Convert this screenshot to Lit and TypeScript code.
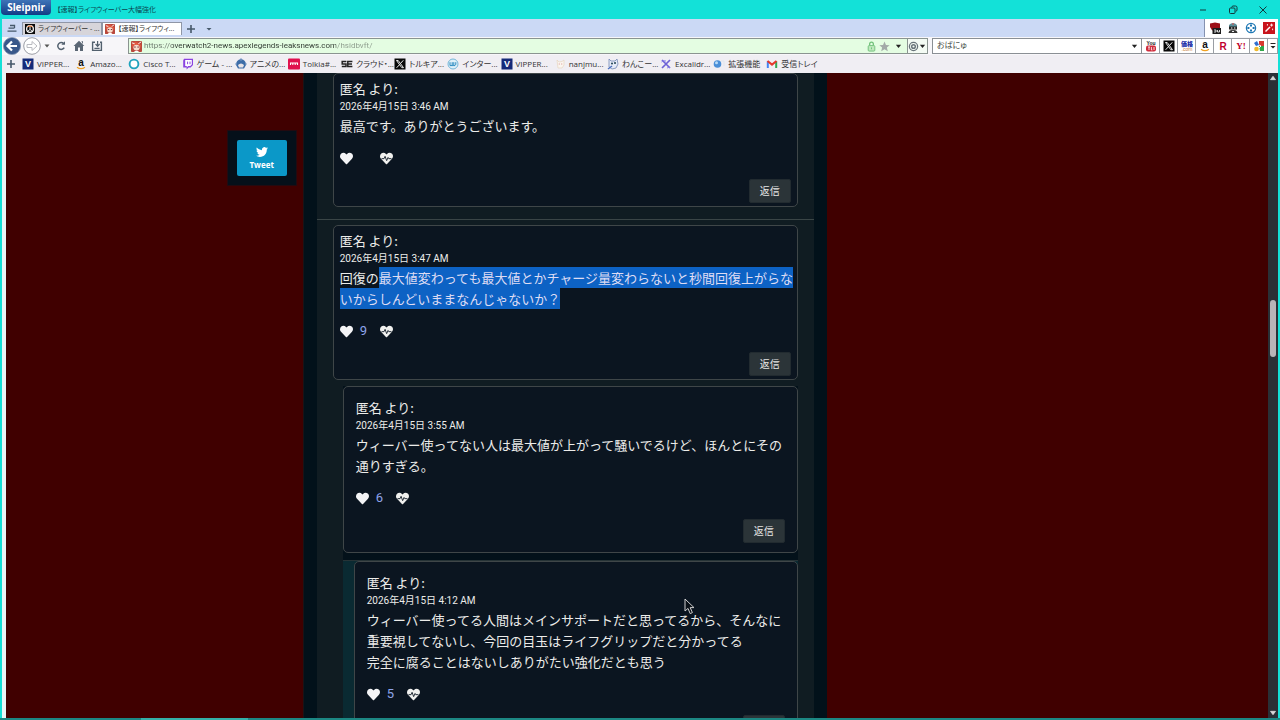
import { LitElement, html, css, svg, nothing, TemplateResult } from "lit";
import { customElement, property } from "lit/decorators.js";

const icon = (body: unknown, size = 12, box = 12) =>
  html`<svg width=${size} height=${size} viewBox="0 0 ${box} ${box}" aria-hidden="true">${body}</svg>`;

const HEART =
  "M462.3 62.6C407.5 15.9 326 24.3 275.7 76.2L256 96.5l-19.7-20.3C186.1 24.3 104.5 15.9 49.7 62.6c-62.8 53.6-66.1 149.8-9.9 207.9l193.5 199.8c12.5 12.9 32.8 12.9 45.3 0l193.5-199.8c56.3-58.1 53-154.3-9.8-207.9z";
const BIRD =
  "M23.953 4.57a10 10 0 01-2.825.775 4.958 4.958 0 002.163-2.723c-.951.555-2.005.959-3.127 1.184a4.92 4.92 0 00-8.384 4.482C7.69 8.095 4.067 6.13 1.64 3.162a4.822 4.822 0 00-.666 2.475c0 1.71.87 3.213 2.188 4.096a4.904 4.904 0 01-2.228-.616v.06a4.923 4.923 0 003.946 4.827 4.996 4.996 0 01-2.212.085 4.936 4.936 0 004.604 3.417 9.867 9.867 0 01-6.102 2.105c-.39 0-.779-.023-1.17-.067a13.995 13.995 0 007.557 2.209c9.053 0 13.998-7.496 13.998-13.985 0-.21 0-.42-.015-.63A9.935 9.935 0 0024 4.59z";

const heart = () => icon(svg`<path fill="#f4f4f6" d=${HEART}/>`, 13, 512);
const heartbeat = () =>
  icon(
    svg`<path fill="#f0f0ee" d=${HEART}/><path d="M60 262H160L200 170L262 340L318 215L345 262H452" fill="none" stroke="#0b1520" stroke-width="34"/>`,
    13,
    512,
  );

const glyph = (letter: string, fill: string, bg: string, size = 9) =>
  svg`<rect x=".5" y=".5" width="11" height="11" fill=${bg}/><text x="6" y="9.3" text-anchor="middle" font-family="Liberation Sans, sans-serif" font-weight="700" font-size=${size} fill=${fill}>${letter}</text>`;
const xMark = svg`<rect x=".5" y=".5" width="11" height="11" fill="#080808"/><path d="M2.5 2.5H4.2L9.5 9.7H7.8Z" fill="none" stroke="#fff" stroke-width=".9"/><path d="M9.3 2.3L6.6 5.4M5.4 6.8L2.6 9.8" stroke="#fff" stroke-width=".9"/>`;
const amazon = svg`<text x="6" y="8" text-anchor="middle" font-family="Liberation Sans, sans-serif" font-weight="700" font-size="10" fill="#111">a</text><path d="M2 9.2Q6 12 10 9.2" fill="none" stroke="#f0a020" stroke-width="1.2"/>`;
const anime = svg`<rect width="12" height="12" rx="1" fill="#b9483c"/><path d="M1 5Q2 0 6 1T11 5L10 8Q9 4 6 4T2 8Z" fill="#e0573f"/><ellipse cx="6" cy="7.2" rx="3.4" ry="3.2" fill="#f7dccb"/><path d="M3.5 6.6h1.6M7 6.6h1.6" stroke="#612" stroke-width="1"/><path d="M1 2l3 1M11 1L8 3" stroke="#fff" stroke-width="1"/><path d="M3 12Q6 9 9 12Z" fill="#fff"/>`;
const overwatch = svg`<rect width="12" height="12" fill="#0a0a0a"/><circle cx="6" cy="6" r="4" fill="none" stroke="#fff" stroke-width="1.5"/><path d="M3.3 9L6 6.3L8.7 9M6 3v3" stroke="#fff" stroke-width="1.2" fill="none"/><path d="M3 3.4Q6 .9 9 3.4" stroke="#e8702a" stroke-width="1.2" fill="none"/>`;
const ring = svg`<circle cx="6" cy="6" r="4.4" fill="#fff" stroke="#1fa3bd" stroke-width="1.9"/>`;
const twitch = svg`<path d="M2 .8H11V7L8.6 9.4H6.6L4.6 11.4V9.4H1.2V2.6Z" fill="#8a42e0"/><path d="M3.2 2h6.6v4.6L8.2 8H6.2L4.8 9.3V8H3.2Z" fill="#fff"/><path d="M5.6 3.6v2.6M8 3.6v2.6" stroke="#8a42e0"/>`;
const knight = svg`<path d="M1 7Q1 2 6 1Q11 2 11 7L9 10.5H3Z" fill="#3d6da8"/><path d="M3 7Q6 4 9 7L8 9.5H4Z" fill="#e9e4e6"/><path d="M0 6h2M10 6h2M6 0v3" stroke="#7d9cc4"/>`;
const pinkTile = svg`<rect y=".5" width="12" height="11" rx="1" fill="#e0104e"/><path d="M2.5 7V5h7v2M4.8 5v2M7.2 5v2" stroke="#fff" stroke-width="1.1" fill="none"/>`;
const se = svg`<path d="M5.4 3.4H1.2V6H5V8.6H.8M11.4 3.4H6.8V8.6H11.4M7 6H11" fill="none" stroke="#222" stroke-width="1.5"/>`;
const wBall = svg`<circle cx="6" cy="6" r="5" fill="#dff0f8" stroke="#74b6d8"/><path d="M3 4.2V7.6H5.2V4.2M5.2 7.6H6.8V4.2M8.8 4.2V6.6L7 8" fill="none" stroke="#2a8ac0"/>`;
const cat = svg`<path d="M3 2l2 2 3-.5L10 2v5L8 10H4Z" fill="#fbf6f0" stroke="#e6d5c0" stroke-width=".7"/><path d="M4.8 6h.8M7.4 6h.8" stroke="#c77"/>`;
const dog = svg`<path d="M2 1l2 2h4l2-2 1 5-2 4-4 1-3-2Z" fill="#e6ebf7" stroke="#7489b5" stroke-width=".8"/><circle cx="5" cy="5.6" r="1" fill="#245"/><circle cx="8" cy="5" r="1" fill="#245"/><path d="M1 11l4-3" stroke="#4a6fc0" stroke-width="1.4"/>`;
const pencils = svg`<path d="M2 2L10 10M10 2L2 10" stroke="#6d62d6" stroke-width="1.7"/><path d="M1.5 4Q3 2 6 3M7 10l3-1" stroke="#8b82ea" fill="none"/>`;
const globe = svg`<circle cx="4.5" cy="6" r="3.8" fill="#4a8fd8"/><circle cx="3.5" cy="4.8" r="1.5" fill="#b7dbf7"/><path d="M8 3h3v5" stroke="#dfe6ee" fill="none"/>`;
const gmail = svg`<path d="M1.8 10V3.2" stroke="#4285f4" stroke-width="2"/><path d="M10.2 10V3.2" stroke="#34a853" stroke-width="2"/><path d="M1.5 3L6 6.6L10.5 3" stroke="#e5382c" stroke-width="2" fill="none"/>`;
const youtube = svg`<text x="6" y="5" text-anchor="middle" font-family="Liberation Sans, sans-serif" font-weight="700" font-size="5" fill="#222">You</text><rect x="1" y="5.4" width="10" height="6" rx="2" fill="#cf2b3b"/><path d="M3 7h2M4 7v3M6.4 7v3h1M9 7v3" stroke="#fff" stroke-width=".8" fill="none"/>`;
const kakaku = svg`<text x="6" y="5.6" text-anchor="middle" font-family="Noto Sans CJK JP, sans-serif" font-weight="900" font-size="6" fill="#1c2fa8">価格</text><text x="6" y="10.8" text-anchor="middle" font-family="Liberation Sans, sans-serif" font-size="5" fill="#c47a3a">.com</text>`;
const rakuten = svg`<text x="6" y="9.6" text-anchor="middle" font-family="Liberation Sans, sans-serif" font-weight="700" font-size="10" fill="#bf0030">R</text>`;
const yahoo = svg`<text x="6" y="9" text-anchor="middle" font-family="Liberation Serif, serif" font-weight="700" font-size="9" fill="#c00028">Y!</text>`;
const gtiles = svg`<path d="M1 3l3-2 2 4-3 1Z" fill="#2f6fd0"/><path d="M6 1h5v5H6z" fill="#d8382f"/><path d="M6 6h5v5H7z" fill="#2fa64a"/><circle cx="3.5" cy="9" r="2.3" fill="#f0b92c"/><path d="M6 5l2 1-2 2" stroke="#fff" fill="none"/>`;
const shieldExt = svg`<path d="M1 1.6L6 .6l5 1V6Q9 9 6 10Q2 8 1 5Z" fill="#9c0f16"/><rect x="3.5" y="6" width="8.5" height="6" fill="#1b1b1b"/><path d="M5 8h2v2H5M8.5 8v2h2V8" stroke="#fff" stroke-width=".8" fill="none"/>`;
const robotExt = svg`<path d="M2 3Q6-1 10 3V5H2Z" fill="#5b8f9a"/><rect x="2" y="4.5" width="8" height="3" fill="#222"/><path d="M1.5 11Q2 7.5 6 8Q10 7.5 10.5 11Z" fill="#333"/><path d="M4 6h1.4M7 6h1.4M5 9.4h2" stroke="#fff"/><path d="M5 2h2" stroke="#e05050"/>`;
const compassExt = svg`<circle cx="6" cy="6" r="4.6" fill="#fff" stroke="#1f78b4" stroke-width="1.3"/><path d="M6 2.4v2M6 7.6v2M2.4 6h2M7.6 6h2" stroke="#1f78b4" stroke-width="2"/>`;
const wandExt = svg`<rect width="12" height="12" fill="#c8141c"/><path d="M2.5 9.5L7 5" stroke="#fff" stroke-width="1.5"/><path d="M8.6 1.6v3M7.1 3.1h3M4.4 2v1.6M9.6 6.6v1.6" stroke="#fff" stroke-width=".9"/>`;
const down = svg`<path d="M1 2h6L4 5.6Z" fill="#222"/>`;
const plus = svg`<path d="M5 1v8M1 5h8" stroke="#46586a" stroke-width="1.6"/>`;

interface Bookmark { label: string; art: unknown; }
const BOOKMARKS: Bookmark[] = [
  { label: "VIPPER...", art: glyph("V", "#fff", "#142a78") },
  { label: "Amazo...", art: amazon },
  { label: "Cisco T...", art: ring },
  { label: "ゲーム - ...", art: twitch },
  { label: "アニメの...", art: knight },
  { label: "Tolkia#...", art: pinkTile },
  { label: "クラウド・...", art: se },
  { label: "トルキア...", art: xMark },
  { label: "インター...", art: wBall },
  { label: "VIPPER...", art: glyph("V", "#fff", "#142a78") },
  { label: "nanjmu...", art: cat },
  { label: "わんこー...", art: dog },
  { label: "Excalidr...", art: pencils },
  { label: "拡張機能", art: globe },
  { label: "受信トレイ", art: gmail },
];
const ENGINES: [string, unknown][] = [
  ["YouTube", youtube], ["X", xMark], ["価格.com", kakaku], ["Amazon", amazon],
  ["楽天", rakuten], ["Yahoo!", yahoo], ["Google", gtiles],
];

@customElement("browser-chrome")
export class BrowserChrome extends LitElement {
  static styles = css`
    :host { display: block; font: 8px/12px "Open Sans", "Noto Sans CJK JP", sans-serif; color: #333; font-feature-settings: "palt"; }
    svg { display: block; flex: none; }
    button { border: 0; padding: 0; background: none; font: inherit; color: inherit; display: flex; align-items: center; justify-content: center; font-feature-settings: inherit; }
    a { color: inherit; text-decoration: none; }
    .title { display: flex; height: 19px; align-items: center; background: #13e1d8; font-size: 7px; color: #0b4650; }
    .brand { align-self: flex-start; margin: 0 6px 0 1px; width: 50px; height: 15px; border-radius: 0 0 4px 4px; background: linear-gradient(#3e74b8, #123c86); color: #fff; font: 700 10px/15px "Noto Sans", sans-serif; }
    .spacer { flex: 1; }
    .window { display: flex; width: 72px; justify-content: space-between; margin-right: 11px; }
    .tabs { display: flex; height: 18px; margin: 0 2px; background: #fff; }
    .strip { display: flex; flex: 1; align-items: flex-end; box-sizing: border-box; padding-bottom: 2px; background: #cbd9f5; border-right: 1px solid #8592b0; }
    .menu { width: 20px; height: 14px; }
    .tab { display: flex; align-items: center; gap: 3px; width: 80px; height: 13px; box-sizing: border-box; padding: 0 2px; border: 1px solid #8f96a6; border-bottom: 0; background: #d7d5da; font-size: 7px; white-space: nowrap; justify-content: flex-start; }
    .tab.active { background: #fff; }
    .tool { width: 18px; height: 13px; }
    .ext { display: flex; align-items: center; justify-content: space-between; width: 66px; padding: 0 3px 0 4px; }
    .bar { display: flex; height: 18px; margin: 0 2px; align-items: center; background: #f7f6f9; }
    .nav { display: flex; align-items: center; gap: 2px; box-sizing: border-box; width: 126px; padding-left: 1px; }
    .nav button { min-width: 16px; }
    .nav .history { min-width: 8px; }
    .url { display: flex; flex: 1; align-items: center; height: 14px; border: 1px solid #8a9490; background: #e4fde2; padding-left: 2px; gap: 2px; }
    .url button, .search button { width: 13px; }
    .url .gear { width: 20px; height: 14px; border-left: 1px solid #8a9490; background: #f4fbf4; }
    input { flex: 1; min-width: 0; border: 0; padding: 0; outline: 0; background: none; color: #3f4a42; font: 8px/12px "Roboto", "Noto Sans CJK JP", sans-serif; font-feature-settings: inherit; }
    .address { color: transparent; background: linear-gradient(90deg, #6b776c 28px, #2f3830 28px 192px, #8b9a8b 192px); background-clip: text; -webkit-background-clip: text; }
    .search { display: flex; width: 16%; height: 14px; align-items: center; margin-left: 4px; padding-left: 4px; border: 1px solid #8a8f94; background: #fff; }
    .engine { width: 17px; height: 14px; border: solid #9a9ea4; border-width: 1px 1px 1px 0; box-sizing: content-box; background: #fff; }
    .engine.more { width: 9px; }
    .marks { display: flex; height: 18px; margin: 0 2px; align-items: center; background: #f0eef3; }
    .add { width: 18px; margin-right: 2px; }
    .list { display: grid; grid-template-columns: repeat(15, minmax(0, 1fr)); width: 62.5%; margin: 0; padding: 0; list-style: none; }
    .list a { display: flex; align-items: center; gap: 3px; white-space: nowrap; }
  `;

  render() {
    return html`
      <header class="title">
        <button class="brand">Sleipnir</button>
        <span>【速報】ライフウィーバー大幅強化</span>
        <span class="spacer"></span>
        <div class="window">
          <button aria-label="最小化">${icon(svg`<path d="M3 6h6" stroke="#12383c"/>`)}</button>
          <button aria-label="元に戻す">${icon(svg`<rect x="2.5" y="4" width="5.5" height="5.5" rx="1" fill="none" stroke="#12383c"/><path d="M4.5 3.5Q5 2 6 2H8.5Q10 2 10 3.5V6Q10 7 8.6 7.6" fill="none" stroke="#12383c"/>`)}</button>
          <button aria-label="閉じる">${icon(svg`<path d="M2.5 2.5l7 7M9.5 2.5l-7 7" stroke="#12383c"/>`)}</button>
        </div>
      </header>
      <div class="tabs">
        <div class="strip" role="tablist">
          <button class="menu" aria-label="タブ一覧">${icon(svg`<path d="M4 3.5h4.5V6M2.5 6.2h6M1.5 9.2h9" fill="none" stroke="#46586a" stroke-width="1.3"/>`)}</button>
          <button class="tab" role="tab">${icon(overwatch, 10)}<span>ライフウィーバー - ...</span></button>
          <button class="tab active" role="tab">${icon(anime, 10)}<span>【速報】ライフウィ...</span></button>
          <button class="tool" aria-label="新しいタブ">${icon(plus, 10, 10)}</button>
          <button class="tool" aria-label="タブメニュー">${icon(svg`<path d="M1.5 3h5L4 5.6Z" fill="#46586a"/>`, 8, 8)}</button>
        </div>
        <div class="ext">
          ${[shieldExt, robotExt, compassExt, wandExt].map((a) => icon(a))}
        </div>
      </div>
      <div class="bar">
        <nav class="nav">
          <button aria-label="戻る">${icon(svg`<circle cx="9" cy="9" r="8.6" fill="#39588a" stroke="#8898b4" stroke-width=".8"/><path d="M14 9H5M9 4.5L4.5 9L9 13.5" fill="none" stroke="#fff" stroke-width="2.2"/>`, 18, 18)}</button>
          <button aria-label="進む">${icon(svg`<circle cx="9" cy="9" r="8.3" fill="#fff" stroke="#9a9ca4"/><path d="M4 7.5H9V4.5L14 9L9 13.5V10.5H4Z" fill="#fff" stroke="#b9bac0"/>`, 18, 18)}</button>
          <button class="history" aria-label="履歴">${icon(svg`<path d="M1.5 2.5h5L4 5.5Z" fill="#555"/>`, 8, 8)}</button>
          <button aria-label="再読み込み">${icon(svg`<path d="M8.6 3.6A3.4 3.4 0 1 0 9.2 7.6" fill="none" stroke="#52606e" stroke-width="1.5"/><path d="M6.4 4.8H10V1.2Z" fill="#52606e"/>`)}</button>
          <button aria-label="ホーム">${icon(svg`<path d="M6 .8L11.4 6H10V11H7V7.6H5V11H2V6H.6Z M8.4 1.2h1.6v3z" fill="#5a6674"/>`)}</button>
          <button aria-label="保存">${icon(svg`<path d="M4 2.2H1.6V10.4H10.4V2.2H9" fill="none" stroke="#52606e" stroke-width="1.4"/><path d="M3.4 8.4h5.2M6.6 1v4M4.6 4L6.6 6.4L8.6 4" fill="none" stroke="#52606e" stroke-width="1.2"/>`)}</button>
        </nav>
        <div class="url">
          ${icon(anime, 11)}
          <input class="address" aria-label="アドレス" .value=${"https://overwatch2-news.apexlegends-leaksnews.com/hsidbvft/"} />
          ${icon(svg`<path d="M4 5V3.4Q4 1.2 6 1.2T8 3.4V5" fill="none" stroke="#6fc078" stroke-width="1.4"/><rect x="2.4" y="5" width="7.2" height="6" rx="1" fill="#bfe8bd" stroke="#6fc078"/><path d="M6 7v2" stroke="#6fc078"/>`, 11)}
          ${icon(svg`<path d="M6 .6L7.6 4.3L11.6 4.6L8.6 7.2L9.6 11.2L6 9L2.4 11.2L3.4 7.2L.4 4.6L4.4 4.3Z" fill="#a3aaa8"/>`, 11)}
          <button aria-label="候補">${icon(down, 7, 8)}</button>
          <button class="gear" aria-label="エンジン">${icon(svg`<circle cx="6" cy="6" r="4.5" fill="none" stroke="#69747a" stroke-width="1.4"/><circle cx="6" cy="6" r="2" fill="none" stroke="#69747a" stroke-width="1.6"/>`, 11)}${icon(down, 7, 8)}</button>
        </div>
        <div class="search">
          <input aria-label="検索" .value=${"おぱにゅ"} />
          <button aria-label="検索履歴">${icon(down, 7, 8)}</button>
        </div>
        ${ENGINES.map(([name, art]) => html`<button class="engine" aria-label=${name}>${icon(art)}</button>`)}
        <button class="engine more" aria-label="その他">${icon(svg`<path d="M1.5 1.5h5" stroke="#222"/><path d="M1.5 4h5L4 6.6Z" fill="#222"/>`, 8, 8)}</button>
      </div>
      <nav class="marks">
        <button class="add" aria-label="追加">${icon(plus, 10, 10)}</button>
        <ul class="list">
          ${BOOKMARKS.map((b) => html`<li><a href="#">${icon(b.art)}<span>${b.label}</span></a></li>`)}
        </ul>
      </nav>
    `;
  }
}

@customElement("comment-card")
export class CommentCard extends LitElement {
  @property() when = "";
  @property() likes = "";
  @property({ type: Boolean, reflect: true }) reply = false;
  @property({ attribute: false }) body: TemplateResult | typeof nothing = nothing;

  static styles = css`
    :host { display: block; }
    .card { box-sizing: border-box; padding: 5px 6px 3px; border: 1px solid #3f4648; border-radius: 5px; background: #0b1520; color: #ececea; }
    :host([reply]) .card { padding: 11px 12px 9px; }
    .name { margin: 0; font: 400 13px/20px "Noto Sans CJK JP", sans-serif; }
    time { display: block; font: 400 10px/16px "Roboto", "Noto Sans CJK JP", sans-serif; }
    p { margin: 0 0 12px; font: 400 13px/21px "Noto Sans CJK JP", sans-serif; white-space: nowrap; }
    mark { background: #0d62c4; color: #dddcf4; display: inline-block; }
    .votes { display: flex; height: 20px; align-items: center; margin-bottom: 11px; }
    .votes button { display: flex; padding: 0; border: 0; background: none; }
    .count { box-sizing: border-box; width: 27px; padding-left: 7px; color: #8ea4ea; font: 13px/20px "Roboto", sans-serif; }
    .foot { display: flex; justify-content: flex-end; }
    .foot button { width: 42px; height: 24px; padding: 0; border: 1px solid #222b30; border-radius: 2px; background: #2b3438; color: #e6e6e4; font: 10px/20px "Noto Sans CJK JP", sans-serif; }
  `;

  render() {
    return html`
      <article class="card">
        <h3 class="name">匿名 より:</h3>
        <time>${this.when}</time>
        <p>${this.body}</p>
        <div class="votes">
          <button aria-label="いいね">${heart()}</button>
          <span class="count">${this.likes}</span>
          <button aria-label="よくない">${heartbeat()}</button>
        </div>
        <div class="foot"><button>返信</button></div>
      </article>
    `;
  }
}

@customElement("app-root")
export class AppRoot extends LitElement {
  static styles = css`
    :host { display: flex; flex-direction: column; height: 100vh; overflow: hidden; background: #13e1d8; position: relative; }
    browser-chrome { flex: none; }
    .view { display: flex; flex: 1; min-height: 0; margin: 0 2px; border-left: 4px solid #e9f6f8; }
    .page { display: grid; grid-template-columns: 70px minmax(0, 524px); column-gap: 6px; flex: 1; min-width: 0; padding-left: 17.35%; overflow: hidden; background: #400000; }
    .share { align-self: start; margin-top: 57px; padding: 9px; border: 1px solid #230a10; background: #05101a; }
    .tweet { display: flex; flex-direction: column; align-items: center; justify-content: center; gap: 1px; width: 100%; height: 36px; padding: 0; border: 0; border-radius: 2px; background: #0b98c8; color: #fff; font: 700 8px/12px "Open Sans", sans-serif; }
    .column { padding: 0 13px; background: #02111a; border-left: 1px solid #1a1316; }
    .thread { min-height: 100%; background: #101c22; }
    .inner { padding: 0 16px; }
    hr { margin: 12px 0 5px; border: 0; border-top: 1px solid #3a4546; }
    .replies { margin: 6px 0 0 10px; background: #03111a; }
    .nested { margin-top: 7px; padding-left: 11px; border-top: 1px solid #263336; background: #0a2a32; }
    .scroll { display: flex; flex-direction: column; align-items: center; width: 10px; background: #2a3036; }
    .gap-top { flex: 216; }
    .thumb { flex: 56; width: 6px; border-radius: 3px; background: #b9b4b7; }
    .gap-bottom { flex: 349; }
    .status { display: flex; flex: none; height: 2px; padding-left: 11%; background: #1c8783; }
    .progress { width: 107px; background: #35b0a8; }
    .cursor { position: absolute; left: 684px; top: 598px; }
    svg { display: block; flex: none; }
  `;

  render() {
    return html`
      <browser-chrome></browser-chrome>
      <div class="view">
        <main class="page">
          <aside class="share">
            <button class="tweet">${icon(svg`<path fill="#fff" d=${BIRD}/>`, 12, 24)}<span>Tweet</span></button>
          </aside>
          <div class="column">
            <div class="thread">
              <div class="inner">
                <comment-card when="2026年4月15日 3:46 AM" .body=${html`最高です。ありがとうございます。`}></comment-card>
              </div>
              <hr />
              <div class="inner">
                <comment-card when="2026年4月15日 3:47 AM" likes="9"
                  .body=${html`回復の<mark>最大値変わっても最大値とかチャージ量変わらないと秒間回復上がらな</mark><br /><mark>いからしんどいままなんじゃないか？</mark>`}></comment-card>
                <div class="replies">
                  <comment-card reply when="2026年4月15日 3:55 AM" likes="6"
                    .body=${html`ウィーバー使ってない人は最大値が上がって騒いでるけど、ほんとにその<br />通りすぎる。`}></comment-card>
                  <div class="nested">
                    <comment-card reply when="2026年4月15日 4:12 AM" likes="5"
                      .body=${html`ウィーバー使ってる人間はメインサポートだと思ってるから、そんなに<br />重要視してないし、今回の目玉はライフグリップだと分かってる<br />完全に腐ることはないしありがたい強化だとも思う`}></comment-card>
                  </div>
                </div>
              </div>
            </div>
          </div>
        </main>
        <div class="scroll" aria-hidden="true">
          ${icon(svg`<path d="M3 8h6L6 4Z" fill="#d8d8d8" stroke="#d8d8d8"/>`, 10)}
          <div class="gap-top"></div><div class="thumb"></div><div class="gap-bottom"></div>
          ${icon(svg`<path d="M3 4h6L6 8Z" fill="#d8d8d8" stroke="#d8d8d8"/>`, 10)}
        </div>
      </div>
      <div class="status"><div class="progress"></div></div>
      <svg class="cursor" width="11" height="17" viewBox="0 0 11 17" aria-hidden="true">
        <path d="M1 1V13L4 10.4L6.2 15.6L8.4 14.6L6.2 9.6H10Z" fill="#0b1118" stroke="#cfcfcf" />
      </svg>
    `;
  }
}
